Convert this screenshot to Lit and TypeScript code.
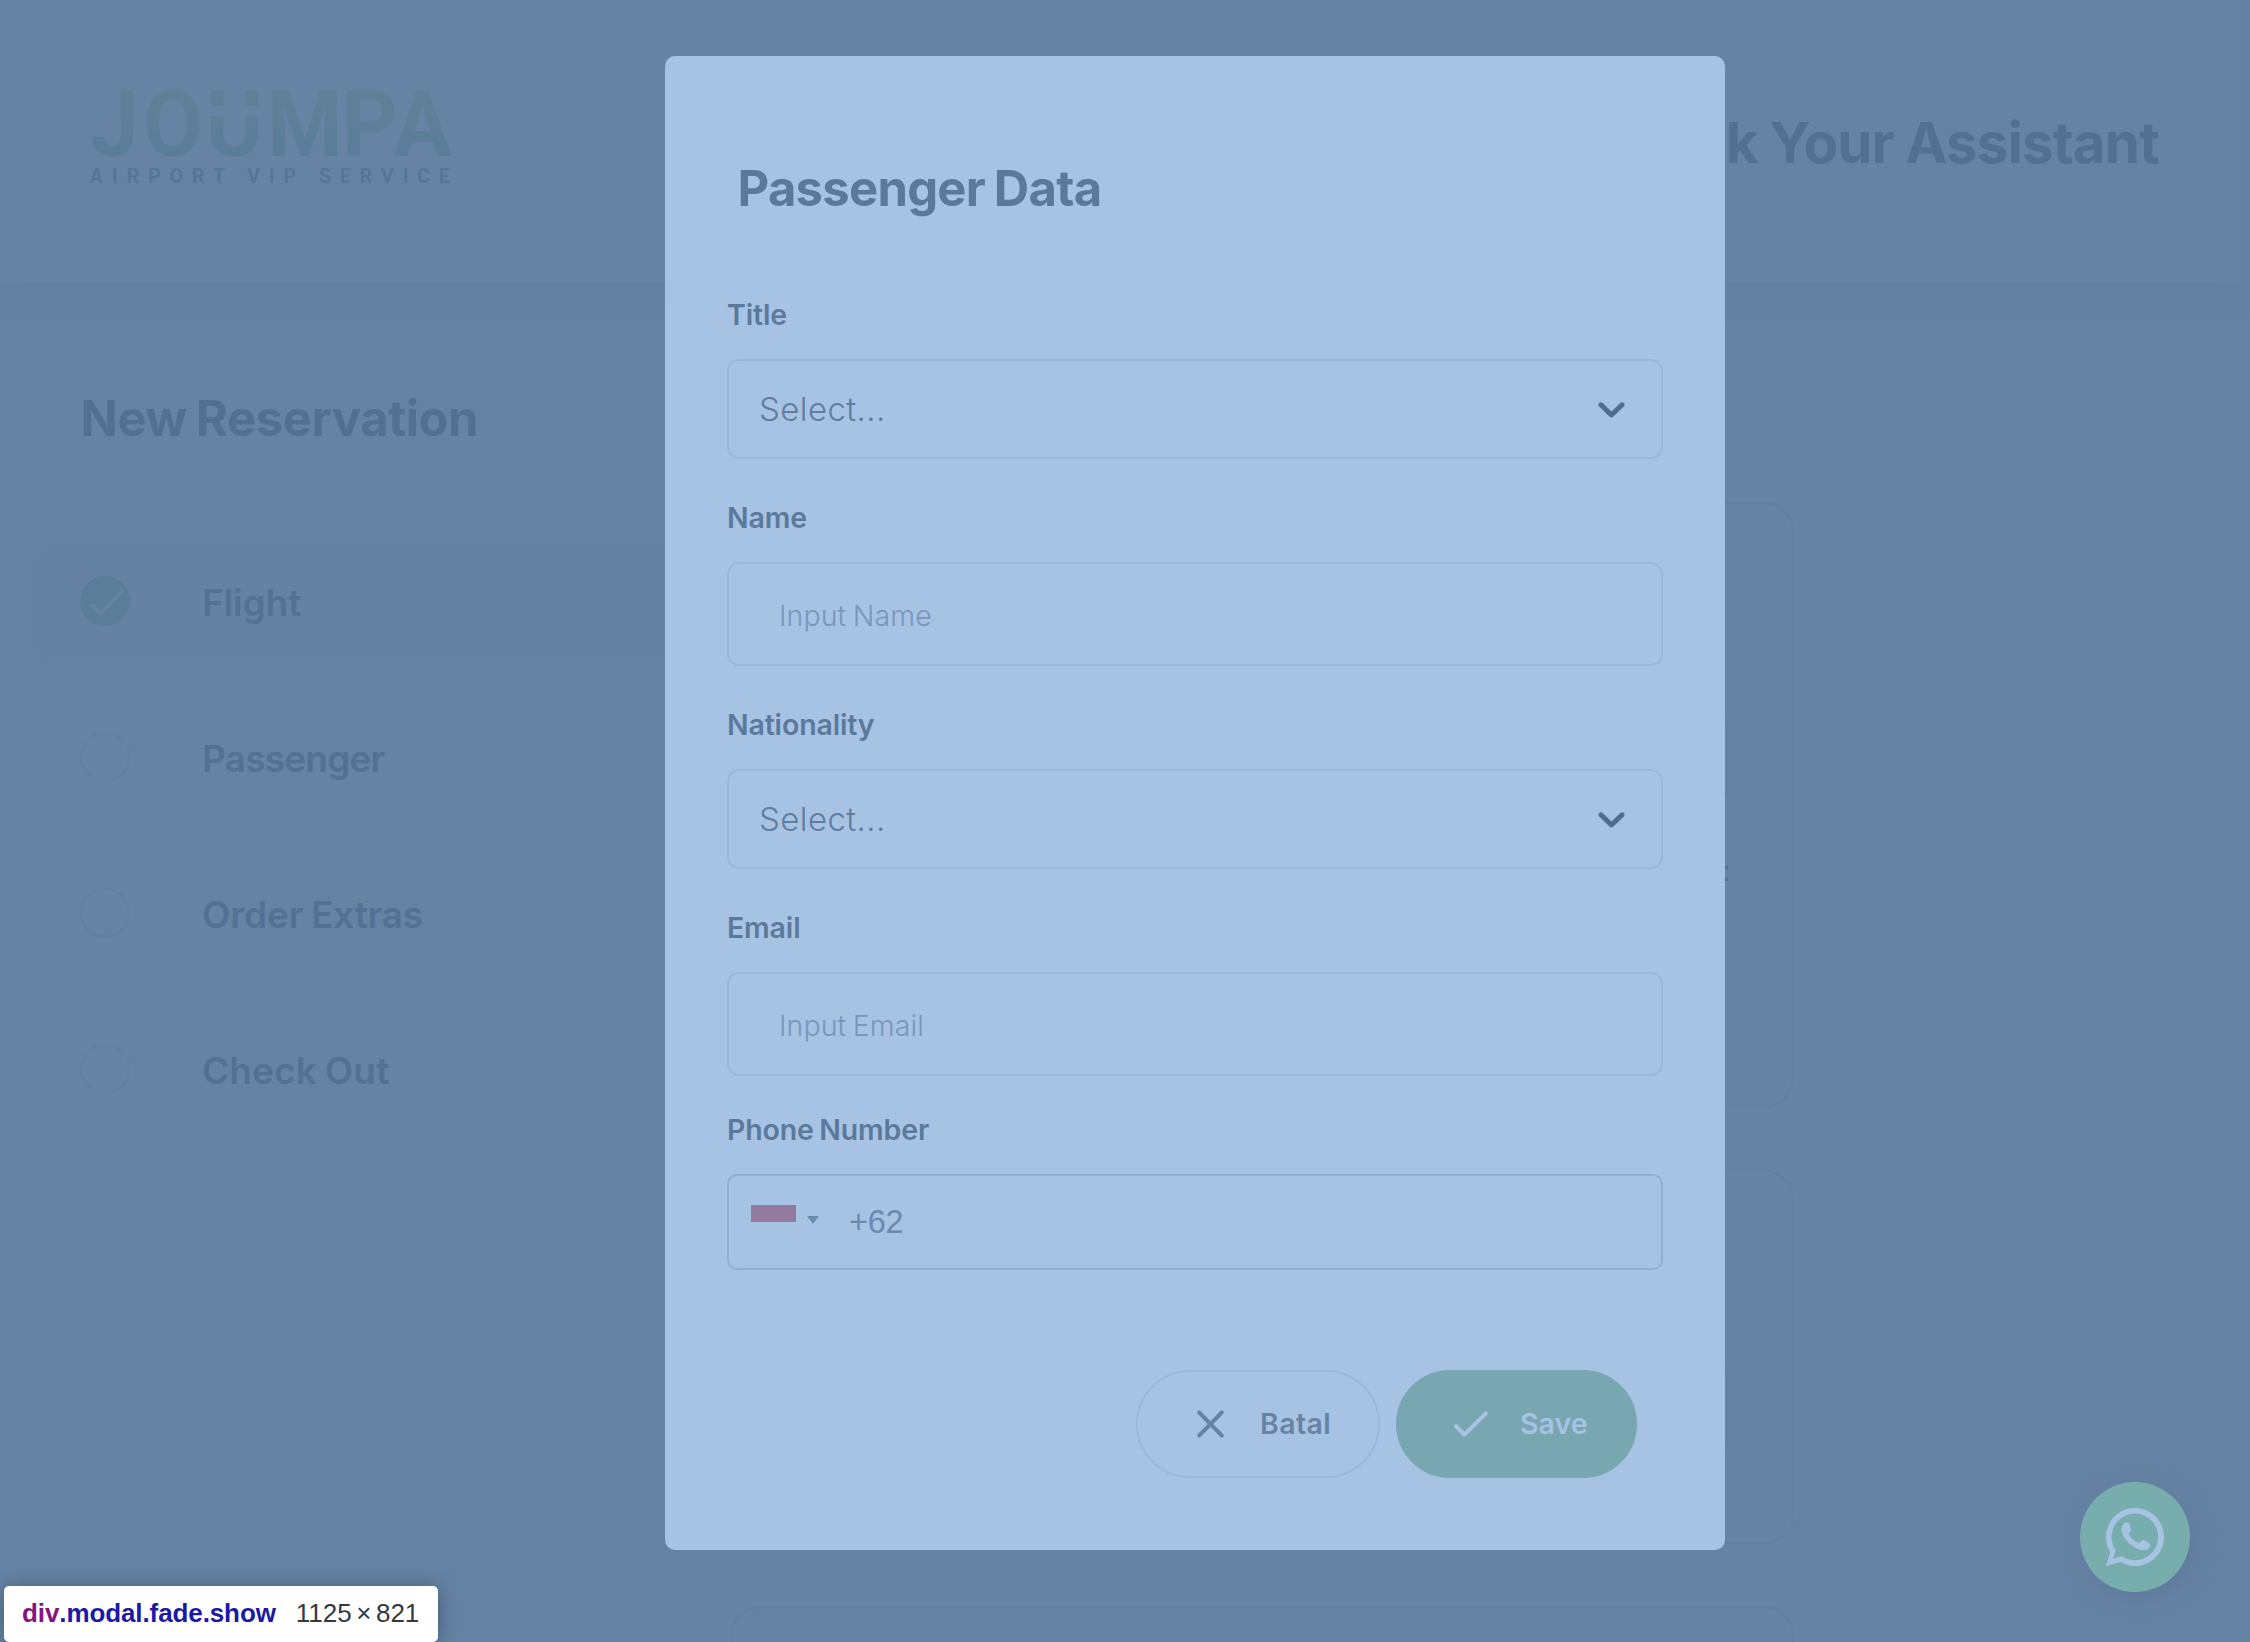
import { LitElement, html, css, nothing } from "lit";
import { customElement } from "lit/decorators.js";
import { classMap } from "lit/directives/class-map.js";

const steps = [
  { name: "Flight", key: "flight", done: true },
  { name: "Passenger", key: "passenger", done: false },
  { name: "Order Extras", key: "extras", done: false },
  { name: "Check Out", key: "checkout", done: false },
];

@customElement("joumpa-logo")
class JoumpaLogo extends LitElement {
  static styles = css`
    :host { display: block; }
    svg { display: block; overflow: visible; }
    .word { font: 700 92.8px Roboto, sans-serif; }
    .tag { font: 700 19.5px Roboto, sans-serif; fill: #587597; }
    .slit { fill: #6683a4; }
  `;
  render() {
    return html`<svg width="372" height="104" viewBox="0 0 372 104">
      <defs>
        <linearGradient id="g" gradientUnits="userSpaceOnUse" x1="0" y1="6" x2="0" y2="72">
          <stop offset="0" stop-color="#618097"></stop>
          <stop offset="0.45" stop-color="#5f7f98"></stop>
          <stop offset="0.8" stop-color="#5a7e99"></stop>
          <stop offset="1" stop-color="#5a7e99"></stop>
        </linearGradient>
      </defs>
      <g transform="scale(.93 1)">
        <text class="word" x="2.5 59.2 126.9 192.5 273.1 328.5" y="72.2" fill="url(#g)">JOUMPA</text>
      </g>
      <rect class="slit" x="119" y="21.7" width="56" height="10.3"></rect>
      <text class="tag" x="2" y="98.7" textLength="360">AIRPORT VIP SERVICE</text>
    </svg>`;
  }
}

@customElement("step-nav")
class StepNav extends LitElement {
  static styles = css`
    :host { display: flex; flex-direction: column; gap: 41px; }
    .row {
      display: flex; align-items: center; height: 115px; box-sizing: border-box;
      padding: 0 0 1px 50px; border-radius: 26px; color: #547193;
      font: 600 37px/44px Inter, sans-serif;
    }
    .row.active { background: #6582a2; }
    .dot {
      width: 50px; height: 50px; box-sizing: border-box; border-radius: 50%;
      border: 2px solid #6280a1; margin: 0 72px 4px 0;
    }
    .dot.done { background: #5a7e99; border-color: #5a7e99; }
    .dot svg { display: block; margin: -2px; }
    .passenger { letter-spacing: -0.8px; }
    .flight { letter-spacing: -0.2px; }
    .extras { letter-spacing: -0.15px; word-spacing: -1.5px; }
    .checkout { letter-spacing: 0.1px; word-spacing: -1.5px; }
  `;
  render() {
    return steps.map(
      (s) => html`<div class=${classMap({ row: true, active: s.done })}>
        <div class=${classMap({ dot: true, done: s.done })}>
          ${s.done
            ? html`<svg width="50" height="50" viewBox="0 0 50 50" fill="none" stroke="#6683a4" stroke-width="3.8" stroke-linecap="round" stroke-linejoin="round"><path d="M11.5 29 20.5 37.5 42 15.5"></path></svg>`
            : nothing}
        </div>
        <span class=${s.key}>${s.name}</span>
      </div>`
    );
  }
}

const chevron = html`<svg class="chevron" width="45" height="45" viewBox="0 0 20 20" fill="#4f6d90"><path d="M4.516 7.548c0.436-0.446 1.043-0.481 1.576 0l3.908 3.747 3.908-3.747c0.533-0.481 1.141-0.446 1.574 0 0.436 0.445 0.408 1.197 0 1.615-0.406 0.418-4.695 4.502-4.695 4.502-0.217 0.223-0.502 0.335-0.787 0.335s-0.57-0.112-0.789-0.335c0 0-4.287-4.084-4.695-4.502s-0.436-1.17 0-1.615z"></path></svg>`;

@customElement("passenger-form")
class PassengerForm extends LitElement {
  static styles = css`
    :host {
      display: block; box-sizing: border-box; height: 1494px; padding: 103.4px 62px 0;
      background: #a7c3e4; border-radius: 10px; font-family: Inter, sans-serif;
    }
    h2 { margin: 0 0 77.2px 10.5px; font: 700 49px/60px Inter, sans-serif; letter-spacing: -0.75px; word-spacing: -2px; color: #5b799b; }
    .group { margin-bottom: 40.6px; }
    .group.tight { margin-bottom: 35.6px; }
    .group.last { margin-bottom: 100px; }
    label { display: block; margin-bottom: 26.4px; font: 600 28.5px/36px Inter, sans-serif; letter-spacing: -0.15px; word-spacing: -1.5px; color: #5b799b; }
    .box { display: flex; align-items: center; box-sizing: border-box; border: 2px solid #9bb8da; border-radius: 12px; }
    .select { height: 100px; padding: 1px 27px 0 30px; justify-content: space-between; font-size: 33px; font-weight: 300; letter-spacing: 0.4px; color: #5f7d9f; }
    .chevron { margin-top: -1px; }
    .input { height: 104px; padding: 4px 0 0 50px; font-size: 28.5px; font-weight: 350; letter-spacing: 0.1px; word-spacing: -1.5px; color: #7896bc; }
    .phone { height: 96px; padding-left: 22px; border-color: #93b0d1; border-radius: 10px; }
    .flag { width: 45px; height: 33px; background: linear-gradient(#927b9f 50%, #a7c3e4 50%); margin-right: 11px; }
    .arrow { border: 6px solid transparent; border-top: 8px solid #6d8bae; border-bottom: 0; margin: -4px 30px 0 0; }
    .dial { font: 32.5px "Liberation Sans", sans-serif; color: #6b89b1; letter-spacing: -0.3px; padding-top: 2px; }
    .actions { display: flex; justify-content: flex-end; gap: 16px; padding-right: 26px; }
    .btn { display: flex; align-items: center; box-sizing: border-box; height: 108px; border-radius: 54px; border: 2px solid #9bb8da; font: 600 28.5px/36px Inter, sans-serif; }
    .cancel { width: 244px; padding-left: 59px; color: #6683a4; letter-spacing: 0.4px; }
    .cancel svg { margin-right: 36px; }
    .save { width: 241px; padding-left: 56px; background: #79a7b1; border-color: #79a7b1; color: #a7c3e4; }
    .save svg { margin-right: 32px; }
  `;
  render() {
    return html`
      <h2>Passenger Data</h2>
      <div class="group"><label>Title</label><div class="box select"><span>Select...</span>${chevron}</div></div>
      <div class="group"><label>Name</label><div class="box input">Input Name</div></div>
      <div class="group"><label>Nationality</label><div class="box select"><span>Select...</span>${chevron}</div></div>
      <div class="group tight"><label>Email</label><div class="box input">Input Email</div></div>
      <div class="group last">
        <label>Phone Number</label>
        <div class="box phone"><div class="flag"></div><div class="arrow"></div><span class="dial">+62</span></div>
      </div>
      <div class="actions">
        <div class="btn cancel">
          <svg width="27" height="28" viewBox="0 0 27 28" fill="none" stroke="#6683a4" stroke-width="4.2" stroke-linecap="round"><path d="M2.4 2.6 24.6 25.4M24.6 2.6 2.4 25.4"></path></svg>
          Batal
        </div>
        <div class="btn save">
          <svg width="34" height="26" viewBox="0 0 34 26" fill="none" stroke="#a7c3e4" stroke-width="4" stroke-linecap="round" stroke-linejoin="round"><path d="M2 15.2 10.5 23.5 31.8 2.3"></path></svg>
          Save
        </div>
      </div>`;
  }
}

@customElement("app-root")
class AppRoot extends LitElement {
  static styles = css`
    :host {
      display: flex; flex-direction: column; position: relative; width: 2250px; height: 1642px;
      overflow: hidden; background: #6683a4; font-family: Inter, sans-serif;
    }
    header {
      display: flex; justify-content: space-between; align-items: flex-start; flex: none;
      box-sizing: border-box; width: 2240px; height: 282px; padding: 84px 81px 0 88px;
      background: #6683a4; box-shadow: 0 8px 36px rgba(80, 105, 135, 0.14);
    }
    header h1 { margin: 29px 0 0; font: 700 56.5px/60px Inter, sans-serif; letter-spacing: -0.85px; word-spacing: -1px; color: #537093; }
    .body { display: flex; flex: 1; min-height: 0; }
    aside { width: 731px; flex: none; box-sizing: border-box; padding: 107px 41px 0 30px; }
    aside h2 { margin: 0 0 97px 50.5px; font: 700 49px/60px Inter, sans-serif; letter-spacing: -0.45px; word-spacing: -2px; color: #537093; }
    main { width: 1063px; padding-top: 220px; display: flex; flex-direction: column; gap: 62px; }
    .card { flex: none; box-sizing: border-box; border: 2px solid #6280a1; border-radius: 30px; padding: 0 64px; }
    .card.one { height: 606px; padding-top: 208px; }
    .card.two { height: 374px; padding-top: 191px; }
    .card.three { height: 374px; }
    .field { height: 93px; box-sizing: border-box; border: 2px solid #6280a1; border-radius: 12px; }
    .field.high { height: 90px; }
    .marks { display: flex; flex-direction: column; align-items: flex-end; gap: 9px; padding-top: 64px; }
    .marks i { width: 12px; height: 3px; background: #537093; }
    .overlay { position: absolute; inset: 0; padding: 56px 525px 92px 665px; }
    .fab {
      position: absolute; right: 60px; bottom: 50px; width: 110px; height: 110px; border-radius: 50%;
      display: flex; align-items: center; justify-content: center; background: #78adae;
      box-shadow: 4px 6px 24px rgba(75, 100, 140, 0.3);
    }
    .tip {
      position: absolute; left: 4px; bottom: 0; width: 434px; height: 56px; box-sizing: border-box;
      display: flex; align-items: center; padding: 0 0 1px 18px; background: #fff; border-radius: 5px;
      font: 26px "Liberation Sans", sans-serif; color: #333940; white-space: pre;
      box-shadow: 0 2px 20px rgba(40, 60, 85, 0.6);
    }
    .tip b { color: #1a1aa6; letter-spacing: -0.1px; }
    .tip b.tag { color: #881280; }
    .size { margin-left: 20px; word-spacing: -2.7px; }
  `;
  render() {
    return html`
      <header><joumpa-logo></joumpa-logo><h1>Book Your Assistant</h1></header>
      <div class="body">
        <aside><h2>New Reservation</h2><step-nav></step-nav></aside>
        <main>
          <div class="card one"><div class="field high"></div><div class="marks"><i></i><i></i></div></div>
          <div class="card two"><div class="field"></div></div>
          <div class="card three"></div>
        </main>
      </div>
      <div class="overlay"><passenger-form></passenger-form></div>
      <div class="fab">
        <svg width="58" height="58" viewBox="0 0 58 58" fill="#a7c3e4">
          <path fill-rule="evenodd" d="M0 58 4.2 44A29 29 0 1 1 14.5 54.1ZM6.9 51 15.6 48.1A23.3 23.3 0 1 0 9.6 42.1Z"></path>
          <path d="M20.6 14.2C22.4 14 23.3 15 23.8 16.8L25 21.2C25.2 23 22.8 24.4 22.6 25.6C24.2 29.6 28 33.4 32.6 35.2C34 34.9 35.6 31.9 37.4 32L43 34.9C44.6 35.8 44.6 36.8 44.1 38.2C43 41.2 40 42.4 37 42.2C27 40.8 17.4 31.4 15.6 23.4C14.9 19.6 16.4 15 20.6 14.2Z"></path>
        </svg>
      </div>
      <div class="tip"><b class="tag">div</b><b>.modal.fade.show</b><span class="size">1125 × 821</span></div>
    `;
  }
}
